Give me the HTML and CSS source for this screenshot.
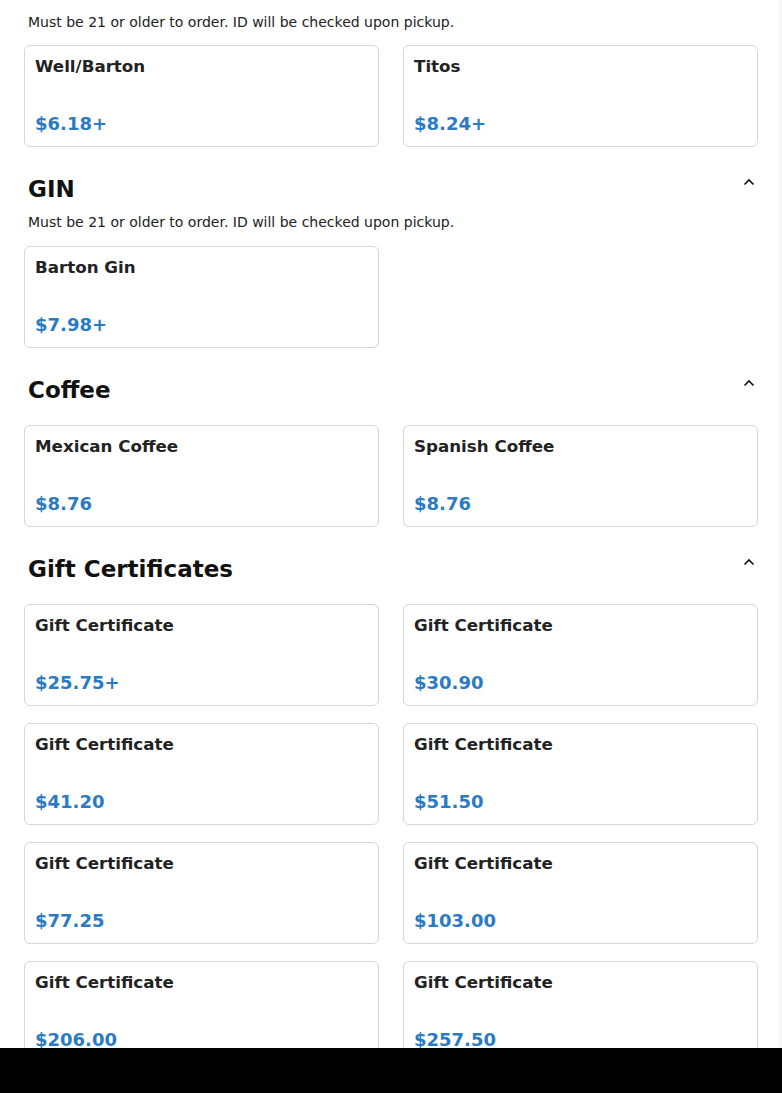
FILE: index.html
```html
<!DOCTYPE html>
<html lang="en">
<head>
    <meta charset="UTF-8">
    <meta name="viewport" content="width=device-width, initial-scale=1.0">
    <title>Menu</title>
    <link rel="stylesheet" href="styles.css">
</head>
<body>
    <div class="menu">
        <section class="category">
            <p class="note note-top">Must be 21 or older to order. ID will be checked upon pickup.</p>
            <div class="items">
                <div class="item">
                    <h3>Well/Barton</h3>
                    <p class="price">$6.18+</p>
                </div>
                <div class="item">
                    <h3>Titos</h3>
                    <p class="price">$8.24+</p>
                </div>
            </div>
        </section>

        <section class="category">
            <div class="category-header">
                <h2>GIN</h2>
                <span class="toggle"><svg width="12" height="8" viewBox="0 0 12 8"><path d="M1.5 6.5 L6 2 L10.5 6.5" fill="none" stroke="#111" stroke-width="1.6"/></svg></span>
            </div>
            <p class="note">Must be 21 or older to order. ID will be checked upon pickup.</p>
            <div class="items">
                <div class="item">
                    <h3>Barton Gin</h3>
                    <p class="price">$7.98+</p>
                </div>
            </div>
        </section>

        <section class="category">
            <div class="category-header">
                <h2>Coffee</h2>
                <span class="toggle"><svg width="12" height="8" viewBox="0 0 12 8"><path d="M1.5 6.5 L6 2 L10.5 6.5" fill="none" stroke="#111" stroke-width="1.6"/></svg></span>
            </div>
            <div class="items">
                <div class="item">
                    <h3>Mexican Coffee</h3>
                    <p class="price">$8.76</p>
                </div>
                <div class="item">
                    <h3>Spanish Coffee</h3>
                    <p class="price">$8.76</p>
                </div>
            </div>
        </section>

        <section class="category">
            <div class="category-header">
                <h2>Gift Certificates</h2>
                <span class="toggle"><svg width="12" height="8" viewBox="0 0 12 8"><path d="M1.5 6.5 L6 2 L10.5 6.5" fill="none" stroke="#111" stroke-width="1.6"/></svg></span>
            </div>
            <div class="items">
                <div class="item"><h3>Gift Certificate</h3><p class="price">$25.75+</p></div>
                <div class="item"><h3>Gift Certificate</h3><p class="price">$30.90</p></div>
                <div class="item"><h3>Gift Certificate</h3><p class="price">$41.20</p></div>
                <div class="item"><h3>Gift Certificate</h3><p class="price">$51.50</p></div>
                <div class="item"><h3>Gift Certificate</h3><p class="price">$77.25</p></div>
                <div class="item"><h3>Gift Certificate</h3><p class="price">$103.00</p></div>
                <div class="item"><h3>Gift Certificate</h3><p class="price">$206.00</p></div>
                <div class="item"><h3>Gift Certificate</h3><p class="price">$257.50</p></div>
            </div>
        </section>
    </div>

    <div class="bottom-bar"></div>
</body>
</html>
```

FILE: styles.css
```css
body {
    font-family: "DejaVu Sans", Verdana, sans-serif;
    margin: 0;
    background: #fff;
    color: #222;
    border-right: 3px solid #f6f6f6;
}
.menu {
    padding: 0 21px 0 24px;
}
.category {
    margin-bottom: 27px;
}
.category-header {
    display: flex;
    align-items: center;
    justify-content: space-between;
    height: 30px;
    padding: 0 3px 0 4px;
}
.category-header h2 {
    margin: 0;
    font-size: 23px;
    font-weight: bold;
    color: #111;
    line-height: 30px;
}
.toggle {
    display: flex;
    width: 12px;
    height: 8px;
    margin-bottom: 14px;
}
.note {
    margin: 8px 0 0;
    padding-left: 4px;
    font-size: 14px;
    line-height: 20px;
    color: #222;
}
.note-top {
    margin-top: 12px;
}
.items {
    display: grid;
    grid-template-columns: 1fr 1fr;
    column-gap: 24px;
    row-gap: 17px;
    margin-top: 14px;
}
.note-top + .items {
    margin-top: 13px;
}
.category-header + .items {
    margin-top: 20px;
}
.item {
    border: 1px solid #d6d6d6;
    border-radius: 6px;
    padding: 10px;
    display: flex;
    flex-direction: column;
}
.item h3 {
    margin: 0;
    font-size: 16.7px;
    line-height: 20px;
    color: #222;
}
.price {
    margin: 36px 0 0;
    font-size: 18px;
    line-height: 24px;
    font-weight: bold;
    color: #2a7bc4;
}
.bottom-bar {
    position: fixed;
    left: 0;
    right: 0;
    bottom: 0;
    height: 45px;
    background: #000;
}
```
